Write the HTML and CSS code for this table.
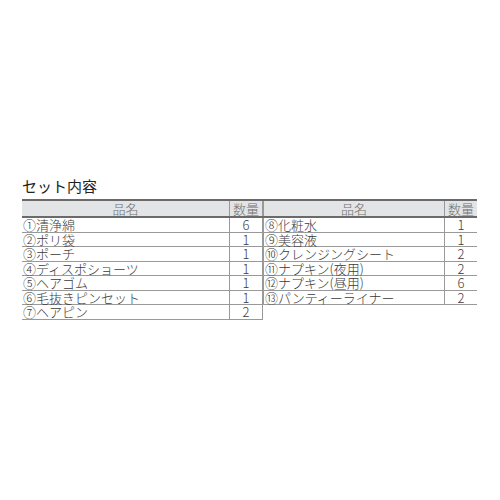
FILE: index.html
```html
<!DOCTYPE html>
<html lang="ja">
<head>
<meta charset="utf-8">
<link rel="stylesheet" href="styles.css">
</head>
<body>
<div class="wrap">
  <h2 class="title">セット内容</h2>
  <div class="tables">
    <table class="set left">
      <thead><tr><th class="name">品名</th><th class="qty">数量</th></tr></thead>
      <tbody>
        <tr><td>①清浄綿</td><td class="qty">6</td></tr>
        <tr><td>②ポリ袋</td><td class="qty">1</td></tr>
        <tr><td>③ポーチ</td><td class="qty">1</td></tr>
        <tr><td>④ディスポショーツ</td><td class="qty">1</td></tr>
        <tr><td>⑤ヘアゴム</td><td class="qty">1</td></tr>
        <tr><td>⑥毛抜きピンセット</td><td class="qty">1</td></tr>
        <tr><td>⑦ヘアピン</td><td class="qty">2</td></tr>
      </tbody>
    </table>
    <table class="set right">
      <thead><tr><th class="name">品名</th><th class="qty">数量</th></tr></thead>
      <tbody>
        <tr><td>⑧化粧水</td><td class="qty">1</td></tr>
        <tr><td>⑨美容液</td><td class="qty">1</td></tr>
        <tr><td>⑩クレンジングシート</td><td class="qty">2</td></tr>
        <tr><td>⑪ナプキン(夜用)</td><td class="qty">2</td></tr>
        <tr><td>⑫ナプキン(昼用)</td><td class="qty">6</td></tr>
        <tr><td>⑬パンティーライナー</td><td class="qty">2</td></tr>
      </tbody>
    </table>
  </div>
</div>
</body>
</html>
```
FILE: styles.css
```css
html, body {
  margin: 0;
  padding: 0;
  background: #fff;
}
body {
  font-family: "Noto Sans CJK JP", "Noto Sans", sans-serif;
  color: #3a3a3a;
}
.wrap {
  padding: 176px 0 0 22px;
}
.title {
  margin: 0 0 4px 0;
  font-size: 15px;
  font-weight: 400;
  line-height: 19px;
  color: #222;
}
.tables {
  display: flex;
  align-items: flex-start;
}
.set {
  border-collapse: collapse;
  font-size: 13px;
  font-weight: 300;
  line-height: 13.5px;
}
.set.left {
  width: 241px;
  border-right: 1px solid #999;
}
.set.right {
  width: 214px;
}
.set th {
  background: #e2e4e6;
  color: #707070;
  font-weight: 300;
  height: 15px;
  padding: 0;
  border-top: 2px solid #6a6a6a;
  border-bottom: 2px solid #6a6a6a;
  border-left: 1px solid #999;
}
.set td {
  height: 13.5px;
  padding: 0 0 0 1px;
  border-bottom: 1px solid #999;
  border-left: 1px solid #999;
  white-space: nowrap;
}
.set .qty {
  width: 32px;
  text-align: center;
  padding: 0;
}
.set.left th:first-child,
.set.left td:first-child {
  border-left: none;
}
```
